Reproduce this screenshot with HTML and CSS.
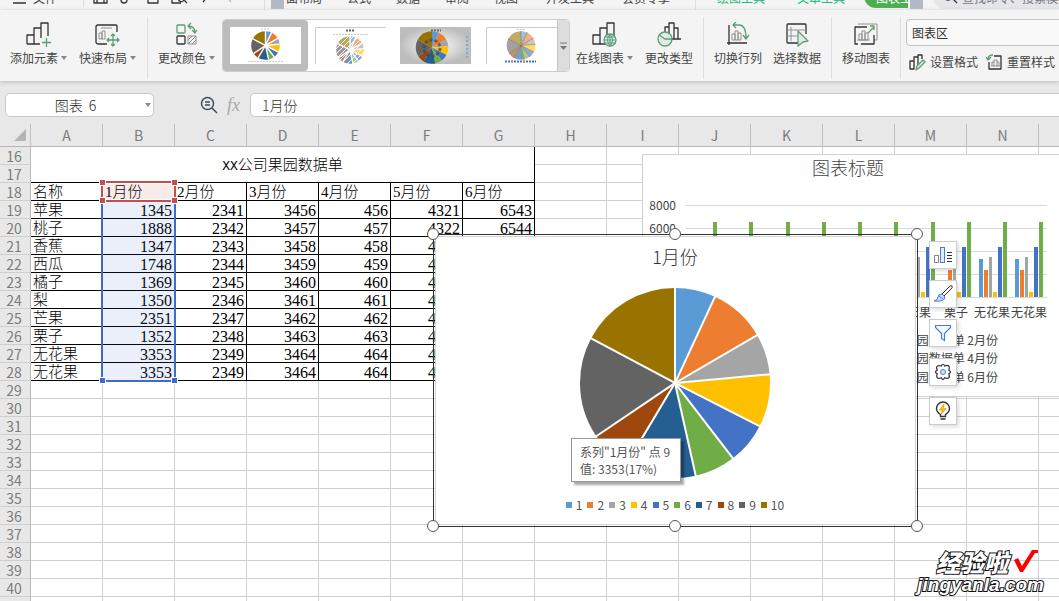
FILE: index.html
```html
<!DOCTYPE html>
<html lang="zh-CN">
<head>
<meta charset="utf-8">
<title>表格</title>
<link rel="stylesheet" href="styles.css">
</head>
<body>
<svg class="defs" aria-hidden="true">
  <symbol id="pie" viewBox="0 0 192 192">
    <g class="slices" transform="rotate(-90 96 96)">
      <circle class="s1" cx="96" cy="96" r="47.5" pathLength="19456" stroke-dasharray="1345 19456"/>
      <circle class="s2" cx="96" cy="96" r="47.5" pathLength="19456" stroke-dasharray="1888 19456" stroke-dashoffset="-1345"/>
      <circle class="s3" cx="96" cy="96" r="47.5" pathLength="19456" stroke-dasharray="1347 19456" stroke-dashoffset="-3233"/>
      <circle class="s4" cx="96" cy="96" r="47.5" pathLength="19456" stroke-dasharray="1748 19456" stroke-dashoffset="-4580"/>
      <circle class="s5" cx="96" cy="96" r="47.5" pathLength="19456" stroke-dasharray="1369 19456" stroke-dashoffset="-6328"/>
      <circle class="s6" cx="96" cy="96" r="47.5" pathLength="19456" stroke-dasharray="1350 19456" stroke-dashoffset="-7697"/>
      <circle class="s7" cx="96" cy="96" r="47.5" pathLength="19456" stroke-dasharray="2351 19456" stroke-dashoffset="-9047"/>
      <circle class="s8" cx="96" cy="96" r="47.5" pathLength="19456" stroke-dasharray="1352 19456" stroke-dashoffset="-11398"/>
      <circle class="s9" cx="96" cy="96" r="47.5" pathLength="19456" stroke-dasharray="3353 19456" stroke-dashoffset="-12750"/>
      <circle class="s10" cx="96" cy="96" r="47.5" pathLength="19456" stroke-dasharray="3353 19456" stroke-dashoffset="-16103"/>
    </g>
  </symbol>
  <symbol id="cuts" viewBox="0 0 192 192">
    <g>
      <path d="M96 98V0"/>
      <path d="M96 98V0" transform="rotate(24.89 96 96)"/>
      <path d="M96 98V0" transform="rotate(59.82 96 96)"/>
      <path d="M96 98V0" transform="rotate(84.74 96 96)"/>
      <path d="M96 98V0" transform="rotate(117.09 96 96)"/>
      <path d="M96 98V0" transform="rotate(142.42 96 96)"/>
      <path d="M96 98V0" transform="rotate(167.4 96 96)"/>
      <path d="M96 98V0" transform="rotate(210.9 96 96)"/>
      <path d="M96 98V0" transform="rotate(235.92 96 96)"/>
      <path d="M96 98V0" transform="rotate(297.96 96 96)"/>
    </g>
  </symbol>
  <symbol id="group" viewBox="0 0 30 76">
    <path fill="#ed7d31" d="M5 49h4v27H5z"/><path fill="#a5a5a5" d="M10 36h3v40h-3z"/>
    <path fill="#ffc000" d="M14 71h4v5h-4z"/><path fill="#4472c4" d="M19 26h4v50h-4z"/>
    <path fill="#70ad47" d="M24 1h4v75h-4z"/>
  </symbol>
  <radialGradient id="steel"><stop offset="0" stop-color="#fff"/><stop offset="1" stop-color="#bdbdbd"/></radialGradient>
</svg>

<nav class="tabs">
  <button class="tab file"><svg width="14" height="14"><path d="M0 2h13M0 7h13M0 12h13" class="k"/></svg>文件<i class="chev"></i></button>
  <div class="quick">
    <svg width="16" height="15"><path class="k" d="M1 1v13h13V3l-2-2zM4 14V8h7v6"/></svg>
    <svg width="16" height="15"><path class="k" d="M13 1v9H5M5 8a3 3 0 1 0 0 6 3 3 0 0 0 0-6"/></svg>
    <svg width="16" height="15"><path class="k" d="M1 3h14v7h-2M1 3v7h2M3 8v6h10V8z"/></svg>
    <svg width="17" height="15"><path class="k" d="M1 1v13h9M9 7a3 3 0 1 0 4 4l3 3"/></svg>
    <svg width="13" height="15"><path class="k" d="M10 2v5l-5 6"/></svg>
    <svg width="13" height="15"><path class="k pale" d="M9 2l-4 5 5 6"/></svg>
    <i class="chev"></i>
  </div>
  <div class="menu">
    <span class="nudge"></span><button class="tab">面布局</button><button class="tab">公式</button><button class="tab">数据</button><button class="tab">审阅</button><button class="tab">视图</button><button class="tab wide">开发工具</button><button class="tab wide">会员专享</button>
  </div>
  <div class="tools"><button class="tab">绘图工具</button><button class="tab">文本工具</button></div>
  <button class="tab active">图表工</button><span class="nudge"></span>
  <label class="search"><svg width="16" height="16"><circle class="k" cx="6" cy="6" r="5"/><path class="k" d="M10 9l5 5"/></svg><input type="text" aria-label="搜索" placeholder="查找命令、搜索模板"></label>
</nav>

<header class="ribbon">
  <div class="group">
    <button class="tool"><svg width="26" height="26"><path class="k" d="M1 22V13h7M8 22V6h7M1 22h13M15 16V1h7v13"/><path class="g" d="M20.500 16v9M16 20.500h9"/></svg><span class="lbl caret">添加元素</span></button>
    <button class="tool"><svg width="26" height="26"><path class="k" d="M12 22H3a2 2 0 0 1-2-2V5a2 2 0 0 1 2-2h18a1 1 0 0 1 1 1v6"/><path class="n" d="M6 6h11M4 17v-6h3v6zM7 17V9h3v8z"/><path class="g" d="M18 12v12M12 18h12M16 14l2-2 2 2M16 22l2 2 2-2M14 16l-2 2 2 2M22 16l2 2-2 2"/></svg><span class="lbl caret">快速布局</span></button>
  </div>
  <div class="group tight">
    <button class="tool"><svg width="24" height="26"><rect class="g" x="2" y="3" width="8" height="8" rx="1"/><rect class="k" x="2" y="14" width="8" height="8" rx="1"/><path class="n" d="M13 14h8v8h-8zM13 18l4-4M13 22l8-8M17 22l4-4"/><path class="g" d="M13 4q7 0 7 7M16 1l-3 3 3 3M17 8l3 3 2-3"/></svg><span class="lbl caret">更改颜色</span></button>
    <div class="gallery">
      <button class="thumb chosen" aria-label="样式1"><svg width="71" height="37"><rect width="71" height="37" fill="#fff"/><path class="dots" d="M31 2h9"/><use href="#pie" x="21" y="4" width="29" height="29"/><use class="cut" href="#cuts" x="21" y="4" width="29" height="29"/><path class="dots" d="M18 34.500h35"/></svg></button>
      <button class="thumb" aria-label="样式2"><svg width="71" height="37"><path d="M.5 37V.5H71" fill="none" stroke="#ccc"/><path class="dots dark" d="M31 3.500h9"/><path class="dots" d="M18 7.500h35"/><use href="#pie" x="21" y="9" width="28" height="28" opacity=".65"/><path class="stripe" d="M20 23l16-16M20 28l20-20M22 31l22-22M24 34l22-22M27 36l21-21M31 38l19-19M36 38l14-14"/><use class="cut" href="#cuts" x="21" y="9" width="28" height="28"/></svg></button>
      <button class="thumb" aria-label="样式3"><svg width="71" height="37"><rect width="71" height="37" fill="url(#steel)"/><path class="dots dark" d="M31 3.500h10"/><use href="#pie" x="15" y="4" width="34" height="33"/><circle cx="32" cy="21" r="8" fill="none" stroke="#444" stroke-width="3" stroke-dasharray="3 2" opacity=".7"/><path d="M67 9v24" stroke="#5b9bd5" stroke-width="2" stroke-dasharray="2 2" opacity=".6"/></svg></button>
      <button class="thumb" aria-label="样式4"><svg width="71" height="37"><path d="M.5 37V.5H71" fill="none" stroke="#ccc"/><path class="dots" d="M31 2.500h9"/><g opacity=".6"><use href="#pie" x="20" y="4" width="30" height="29"/></g><use class="edge" href="#cuts" x="20" y="4" width="30" height="29"/><path d="M19 34.500h31" stroke="#4472c4" stroke-width="2" stroke-dasharray="2 1"/><path d="M25 34.500h2M37 34.500h2" stroke="#ed7d31" stroke-width="2"/></svg></button>
      <button class="more" aria-label="更多"><svg width="7" height="8"><path d="M0 1h7" stroke="#777"/><path d="M0 4h7L3.500 8z" fill="#777"/></svg></button>
    </div>
    <div class="pair">
      <button class="tool"><svg width="26" height="26"><path class="k" d="M1 22V13h7v9zM8 14V6h7v16H8M15 8V1h7v13"/><circle class="g" cx="18" cy="18" r="6" fill="#e9eee9"/><path class="g thin" d="M12 18h12M18 12v12M13 15h10M13 21h10M18 12q-5 6 0 12q5-6 0-12"/></svg><span class="lbl caret">在线图表</span></button>
      <button class="tool"><svg width="26" height="26"><path class="k" d="M9 11V5h4v12M13 7V1h5v16M18 6h4v11M16 17h9"/><circle class="g" cx="9" cy="17" r="7" fill="#e4e9e5"/><path class="g" d="M3 13l6 4h7"/></svg><span class="lbl">更改类型</span></button>
    </div>
  </div>
  <div class="group">
    <button class="tool"><svg width="26" height="26"><path class="k" d="M4 3v20M2 21h20"/><path class="n" d="M7 18v-6h3v6zM10 18V9h3v9zM13 18v-7h3v7z"/><path class="g" d="M8 3h6q7 0 7 13M11 0L8 3l3 3M18 13l3 4 3-4"/></svg><span class="lbl">切换行列</span></button>
    <button class="tool"><svg width="26" height="26"><path class="k" d="M14 21H4a1 1 0 0 1-1-1V3a1 1 0 0 1 1-1h17a1 1 0 0 1 1 1v9"/><path class="n" d="M3 8h19M3 14h10M7 5v14"/><path class="g" fill="#dfe9e2" d="M14 9l10 10-5 1-5 4z"/></svg><span class="lbl">选择数据</span></button>
  </div>
  <div class="group">
    <button class="tool"><svg width="26" height="26"><path class="n" d="M5 2h19v16h-3"/><path class="k" d="M14 5H2v17h3M8 22h13V13"/><path class="n" d="M6 18v-6h3v6zM9 18V9h3v9zM12 18v-7h3v7zM4 18h13"/><path class="g" d="M15 11l6-6M17 4h4v4"/></svg><span class="lbl">移动图表</span></button>
  </div>
  <div class="format">
    <select aria-label="图表元素"><option>图表区</option></select>
    <div class="row">
      <button class="inline"><svg width="18" height="18"><path class="k" d="M1 16V8h4v8zM5 10V4h4v9M9 5V2h4v4"/><path class="g" d="M7 17l1-4 6-6 2 2-6 6z" fill="#dfe9e2"/></svg>设置格式</button>
      <button class="inline"><svg width="18" height="18"><path class="k" d="M8 3h7v13H3V9"/><path class="n" d="M5 13h9M6 13V9h2v4M8 9V7h3v6M11 9h2v4"/><path class="g" d="M2 6q0-4 5-4M0 4l2 3 3-3"/></svg>重置样式</button>
    </div>
  </div>
</header>

<section class="formula">
  <label class="name"><input type="text" aria-label="名称框" value="图表  6"><i class="chev"></i></label>
  <div class="fx"><svg width="18" height="18"><circle cx="7.500" cy="7.500" r="6" fill="none" stroke="#3f4d63" stroke-width="1.500"/><path d="M5 6h5M5 9h5M12 12l5 5" stroke="#3f4d63" stroke-width="1.500"/></svg><em>fx</em></div>
  <input class="bar" type="text" aria-label="编辑栏" value="1月份">
</section>

<main class="sheet">
  <table class="grid" id="grid"></table>

  <div class="range data"><i></i><i></i></div>
  <div class="range head"><i></i><i></i><i></i><i></i></div>

  <svg class="bars" width="440" height="244">
    <rect x=".5" y=".5" width="450" height="242" fill="#fff" stroke="#d0d0d0"/>
    <path d="M43 51.500h362M43 74.500h362M43 97.500h362M43 120.500h362M43 143.500h362" stroke="#d9d9d9"/>
    <g>
      <use href="#group" x="47" y="67" width="30" height="76"/><use href="#group" x="83" y="67" width="30" height="76"/>
      <use href="#group" x="120" y="67" width="30" height="76"/><use href="#group" x="156" y="67" width="30" height="76"/>
      <use href="#group" x="192" y="67" width="30" height="76"/><use href="#group" x="228" y="67" width="30" height="76"/>
      <use href="#group" x="265" y="67" width="30" height="76"/><use href="#group" x="301" y="67" width="30" height="76"/>
      <use href="#group" x="337" y="67" width="30" height="76"/><use href="#group" x="373" y="67" width="30" height="76"/>
      <path fill="#5b9bd5" d="M337 105h4v38h-4zM373 105h4v38h-4z"/>
    </g>
    <text class="big" x="206" y="21">图表标题</text>
    <g class="axis"><text x="34" y="56">8000</text><text x="34" y="79">6000</text></g>
    <g class="cats"><text x="277" y="163">芒果</text><text x="314" y="163">栗子</text><text x="350" y="163">无花果</text><text x="387" y="163">无花果</text></g>
    <g class="axis"><text x="356" y="191">XX公司果园数据单 2月份</text><text x="356" y="209">XX公司果园数据单 4月份</text><text x="356" y="228">XX公司果园数据单 6月份</text></g>
  </svg>

  <figure class="piebox">
    <figcaption>1月份</figcaption>
    <svg class="pie" viewBox="0 0 192 192"><use href="#pie" width="192" height="192"/><use class="cut big-cut" href="#cuts" width="192" height="192"/></svg>
    <ul class="legend">
      <li><i class="b1"></i>1</li><li><i class="b2"></i>2</li><li><i class="b3"></i>3</li><li><i class="b4"></i>4</li><li><i class="b5"></i>5</li><li><i class="b6"></i>6</li><li><i class="b7"></i>7</li><li><i class="b8"></i>8</li><li><i class="b9"></i>9</li><li><i class="b10"></i>10</li>
    </ul>
    <b class="knob tl"></b><b class="knob tm"></b><b class="knob tr"></b><b class="knob bl"></b><b class="knob bm"></b><b class="knob br"></b>
  </figure>

  <div class="tip" role="tooltip">系列"1月份" 点 9<br>值: 3353(17%)</div>

  <div class="side">
    <button aria-label="图表元素"><svg width="20" height="20"><rect x="1.500" y="10.500" width="4" height="7" fill="none" stroke="#888"/><rect x="7.500" y="2.500" width="4" height="15" fill="#e4ecfb" stroke="#4a7bdc"/><path d="M14 7.500h5M14 10.500h5M14 13.500h5M14 16.500h5" stroke="#333"/></svg></button>
    <button aria-label="图表样式"><svg width="20" height="20"><path d="M9 10l7-7q2-2 3-1t-1 3l-7 7z" fill="#fff" stroke="#333"/><path d="M1 17q4-1 4-4t4-3l3 3q0 5-11 4zM6 12l4 3" fill="#cfdffb" stroke="#4a7bdc"/></svg></button>
    <button aria-label="图表筛选器"><svg width="20" height="20"><path d="M2.500 2.500h15v2l-6 6v7l-3-2v-5l-6-6z" fill="#f2f6ff" stroke="#4a7bdc" stroke-width="1.200"/></svg></button>
    <button aria-label="设置"><svg width="20" height="20"><path d="M8.300 4q1.700-3.500 3.400 0q3.600-1.300 4.300.200t-.2 4.100q3.500 1.700 0 3.400q1.300 3.600-.2 4.300t-4-.2q-1.600 3.500-3.300 0q-3.600 1.300-4.300-.2t.2-3.900q-3.500-1.700 0-3.400Q2.900 4.700 4.400 4t3.900 0z" fill="#fff" stroke="#333" stroke-width="1.200"/><circle cx="10" cy="10" r="2.500" fill="#cfdffb" stroke="#4a7bdc"/></svg></button>
    <button aria-label="智能推荐"><svg width="20" height="20"><path d="M7.500 15.500v-2Q3.500 11 3.500 7.500a6.500 6.500 0 0 1 13 0q0 3.500-4 6v2zM7.500 18h5" fill="#fff" stroke="#333" stroke-width="1.400"/><path d="M11 3L6.500 9H9l-.5 4L13 7.500h-2.500z" fill="#ffc400" stroke="#e08a00" stroke-width=".6"/></svg></button>
  </div>

  <div class="mark"><div class="mark-top"><span>经验啦</span><svg width="26" height="26"><path d="M1 11l4-2 4 8L19 1h6v3h-3L10 23H7z" fill="#f00"/></svg></div><div class="mark-url">jingyanla.com</div></div>
</main>
<script src="grid.js"></script>
</body>
</html>
```
FILE: styles.css
```css
* { box-sizing: border-box; }
html, body { height: 100%; }
body {
  margin: 0;
  display: flex;
  flex-direction: column;
  overflow: hidden;
  background: #e8e8e8;
  color: #444;
  font: 12px/18px "Noto Sans CJK SC", sans-serif;
}
button, input, select { font: inherit; color: inherit; margin: 0; padding: 0; border: 0; background: none; outline: 0; }
svg { display: block; flex: none; }
.defs { position: absolute; width: 0; height: 0; }
.k, .g, .n { fill: none; stroke: #333; stroke-width: 1.3; stroke-linejoin: round; }
.k.pale { stroke: #bbb; }
.g { stroke: #5a9e76; }
.g.thin { stroke-width: 1; }
.g[fill] { fill: #e2ebe5; }
.n { stroke: #909090; stroke-width: 1; }
.chev { flex: none; width: 0; height: 0; border: 3px solid transparent; border-top: 4px solid #888; border-bottom: 0; }

/* tab strip */
.tabs { flex: none; display: flex; align-items: flex-end; height: 10px; overflow: hidden; background: #f4f4f4; padding-left: 13px; white-space: nowrap; }
.tab { height: 18px; margin-bottom: 3px; flex: none; }
.file { display: flex; align-items: center; gap: 6px; width: 71px; border-right: 1px solid #ddd; }
.file .chev { margin-left: 3px; }
.quick { display: flex; align-items: center; gap: 10px; width: 181px; padding: 0 8px 6px 9px; border-right: 1px solid #ddd; }
.menu { display: flex; align-items: flex-end; gap: 25px; width: 431px; padding-left: 6px; border-right: 1px solid #ddd; }
.nudge { flex: none; width: 13px; height: 20px; margin-bottom: 1px; background: #b5b9c3; }
.menu .nudge { margin-right: -23px; }
.menu .wide { margin-left: 3px; }
.tools { display: flex; gap: 32px; padding: 0 19px 0 21px; color: #1fb97a; }
.active { width: 44px; background: #4cae4f; color: #fff; border-radius: 0 0 0 12px; padding-left: 12px; margin-bottom: 2px; height: 20px; text-align: left; }
.active + .nudge { margin-left: 2px; }
.search { flex: 1; min-width: 0; display: flex; align-items: center; gap: 4px; height: 24px; margin: 0 0 1px 10px; padding-left: 9px; background: #e4e6ea; border-radius: 12px 0 0 12px; }
.search input { flex: 1; min-width: 0; height: 20px; }
.search input::placeholder { color: #777; opacity: 1; }

/* ribbon */
.ribbon { flex: none; position: relative; display: flex; background: #f4f4f4; height: 71px; box-shadow: 0 1px 4px #bbb; padding: 7px 0 2px; overflow: hidden; }
.group { flex: none; display: flex; gap: 11px; padding: 0 10px; border-right: 1px solid #dedede; }
.group.tight { gap: 6px; }
.pair { display: flex; gap: 11px; }
.tool { display: flex; flex-direction: column; align-items: center; gap: 1px; padding-top: 5px; }
.lbl { height: 18px; }
.caret { display: flex; align-items: center; gap: 3px; width: 58px; }
.caret::after { content: ""; border: 3px solid transparent; border-top: 4px solid #888; border-bottom: 0; }
.gallery { display: flex; width: 348px; height: 53px; margin-top: 2px; background: #fff; border: 1px solid #ccc; border-radius: 4px; overflow: hidden; }
.thumb { flex: none; width: 85px; display: flex; align-items: center; justify-content: center; }
.thumb:nth-child(4) { width: 79px; justify-content: flex-end; }
.chosen { background: #bcbcbc; border-radius: 0 4px 4px 0; }
.more { flex: none; width: 12px; background: #ddd; border-left: 1px solid #c4c4c4; display: flex; align-items: center; justify-content: center; }
.dots { stroke: #ccc; stroke-width: 1; stroke-dasharray: 2 1; }
.dots.dark { stroke: #666; stroke-width: 2; }
.stripe { stroke: #fff; stroke-width: 1; }
.cut { stroke: #fff; stroke-width: 9; }
.edge { stroke: #8a7a50; stroke-width: 4; }
.format { flex: 1; min-width: 160px; padding-left: 5px; margin-top: 2px; }
.format select { display: block; width: 170px; height: 27px; padding: 0 5px; background: #f9f9f9; border: 1px solid #c4c4c4; border-radius: 4px; appearance: none; color: #333; }
.row { display: flex; gap: 8px; padding: 7px 0 0 3px; }
.inline { flex: none; display: flex; align-items: center; gap: 3px; }

/* pie colours */
.slices { fill: none; stroke-width: 95; }
.s1 { stroke: #5b9bd5; } .s2 { stroke: #ed7d31; } .s3 { stroke: #a5a5a5; } .s4 { stroke: #ffc000; } .s5 { stroke: #4472c4; }
.s6 { stroke: #70ad47; } .s7 { stroke: #255e91; } .s8 { stroke: #9e480e; } .s9 { stroke: #636363; } .s10 { stroke: #997300; }
.b1 { background: #5b9bd5; } .b2 { background: #ed7d31; } .b3 { background: #a5a5a5; } .b4 { background: #ffc000; } .b5 { background: #4472c4; }
.b6 { background: #70ad47; } .b7 { background: #255e91; } .b8 { background: #9e480e; } .b9 { background: #636363; } .b10 { background: #997300; }

/* formula bar */
.formula { flex: none; display: flex; align-items: center; height: 43px; padding: 5px 0 0 5px; font: 300 14px/22px "Noto Sans CJK SC", sans-serif; }
.name { display: flex; align-items: center; width: 149px; height: 24px; padding-right: 2px; background: #fff; border: 1px solid #c8c8c8; border-radius: 5px; }
.name input { flex: 1; min-width: 0; text-align: center; color: #222; }
.fx { display: flex; align-items: center; gap: 9px; width: 96px; padding-left: 46px; }
.fx em { font: italic 18px/22px "Liberation Serif", serif; color: #aaa; }
.bar { flex: 1; min-width: 0; height: 24px; padding-left: 11px; background: #fff; border: 1px solid #c8c8c8; border-right: 0; border-radius: 5px 0 0 5px; color: #333; }

/* sheet */
.sheet { flex: 1; min-height: 0; position: relative; overflow: hidden; background: #fff; }
.grid { table-layout: fixed; width: 1111px; border-collapse: separate; border-spacing: 0; }
.grid th { font-weight: 400; color: #7c7c7c; background: #e8e8e8; padding: 0; }
.grid thead th { height: 23px; font-size: 14px; line-height: 20px; border-bottom: 1px solid #b8b8b8; border-right: 1px solid #c0c0c0; }
.grid .corner { width: 31px; }
.corner svg { margin-left: 14px; }
.grid tbody th { height: 18px; font-size: 14px; line-height: 16px; border-right: 1px solid #b8b8b8; border-bottom: 1px solid #cfcfcf; padding-right: 2px; }
.grid td { height: 18px; padding: 0 2px; line-height: 17px; overflow: hidden; white-space: nowrap; color: #000; border-right: 1px solid #d0d0d0; border-bottom: 1px solid #d0d0d0; }
.grid td.box { border-color: #000; padding-top: 1px; font: 300 15px/16px "Liberation Serif", "Noto Sans CJK SC", serif; }
.grid td.num { text-align: right; font-size: 16px; padding-top: 2px; line-height: 15px; }
.grid td.title { text-align: center; padding-top: 3px; }
.title span { font: 13px/16px "Liberation Mono", monospace; }

.range { position: absolute; left: 101px; width: 75px; }
.range.head { top: 57px; height: 21px; border: 2px solid #c0504d; background: #c0504d1c; box-shadow: inset 0 0 0 1px #fff; }
.range.data { top: 76px; height: 182px; border: 2px solid #3f6bcb; background: #4169d01c; }
.range i { position: absolute; width: 7px; height: 7px; border: 1px solid #fff; }
.head i { background: #c0504d; }
.data i { background: #3f6bcb; }
.head i:nth-child(1) { left: -4px; top: -4px; } .head i:nth-child(2) { right: -4px; top: -4px; }
.head i:nth-child(3), .data i:nth-child(1) { left: -4px; bottom: -4px; } .head i:nth-child(4), .data i:nth-child(2) { right: -4px; bottom: -4px; }

/* bar chart */
.bars { position: absolute; left: 642px; top: 30px; font-size: 12px; fill: #444; }
.bars .big { font-size: 18px; font-weight: 300; text-anchor: middle; fill: #444; }
.bars .axis { text-anchor: end; }
.bars .cats { text-anchor: middle; }

/* pie chart */
.piebox { position: absolute; z-index: 1; left: 433px; top: 110px; width: 485px; height: 293px; margin: 0; padding: 8px 1px 0 0; border: 1px solid #333; display: flex; flex-direction: column; align-items: center; }
.piebox::before { content: ""; position: absolute; inset: 1px; border: 1px solid #d4d4d4; background: #fff; z-index: -1; }
figcaption { font-size: 18px; line-height: 26px; font-weight: 300; color: #333; }
.pie { width: 192px; height: 192px; margin-top: 18px; }
.big-cut { stroke-width: 2; }
.legend { display: flex; gap: 5px; margin: 17px 0 0; padding: 0; list-style: none; line-height: 18px; color: #555; }
.legend li { display: flex; align-items: center; gap: 4px; }
.legend i { width: 6px; height: 6px; }
.knob { position: absolute; width: 12px; height: 12px; border: 1px solid #555; border-radius: 50%; background: #fff; }
.tl, .tm, .tr { top: -7px; } .bl, .bm, .br { bottom: -6px; }
.tl, .bl { left: -7px; } .tr, .br { right: -6px; } .tm, .bm { left: 235px; }

.tip { position: absolute; z-index: 2; left: 571px; top: 314px; padding: 4px 10px 4px 8px; background: #fff; border: 1px solid #999; box-shadow: 3px 3px 2px #0005; line-height: 17px; color: #555; white-space: nowrap; }

.side { position: absolute; z-index: 2; left: 929px; top: 117px; display: flex; flex-direction: column; gap: 11px; }
.side button { width: 28px; height: 28px; display: flex; align-items: center; justify-content: center; background: #fff; border: 1px solid #ccc; box-shadow: 2px 2px 4px #0002; }

.mark { position: absolute; right: 15px; bottom: 6px; color: #fff; text-align: right; font-style: italic; font-weight: 900; -webkit-text-stroke: 2px #111; paint-order: stroke fill; }
.mark-top { display: flex; justify-content: flex-end; gap: 5px; font-size: 24px; line-height: 26px; padding-right: 5px; }
.mark-url { font: italic 700 19px/20px "Liberation Sans", sans-serif; }
```
FILE: grid.js
```js
const names = ["苹果", "桃子", "香蕉", "西瓜", "橘子", "梨", "芒果", "栗子", "无花果", "无花果"];
const first = [1345, 1888, 1347, 1748, 1369, 1350, 2351, 1352, 3353, 3353];
const cols = "ABCDEFGHIJKLMNO".split("");
const blank = n => "<td></td>".repeat(n);

let html = '<thead><tr><th class="corner"><svg width="12" height="12"><path d="M12 0v12H0z" fill="#b4b4b4"/></svg></th>' +
  cols.map(c => `<th scope="col">${c}</th>`).join("") + "</tr></thead><tbody>";

for (let r = 16; r <= 41; r++) {
  html += `<tr><th scope="row">${r}</th>`;
  if (r === 16) {
    html += '<td class="box title" colspan="7" rowspan="2"><span>XX</span>公司果园数据单</td>' + blank(8);
  } else if (r === 17) {
    html += blank(8);
  } else if (r === 18) {
    html += '<td class="box">名称</td>';
    for (let m = 1; m <= 6; m++) html += `<td class="box">${m}月份</td>`;
    html += blank(8);
  } else if (r <= 28) {
    const i = r - 19, k = Math.min(i, 8);
    const row = [first[i], 2341 + k, 3456 + k, 456 + k, 4321 + k, 6543 + k];
    html += `<td class="box">${names[i]}</td>` + row.map(v => `<td class="box num">${v}</td>`).join("") + blank(8);
  } else {
    html += blank(15);
  }
  html += "</tr>";
}
document.getElementById("grid").innerHTML = html + "</tbody>";
```
